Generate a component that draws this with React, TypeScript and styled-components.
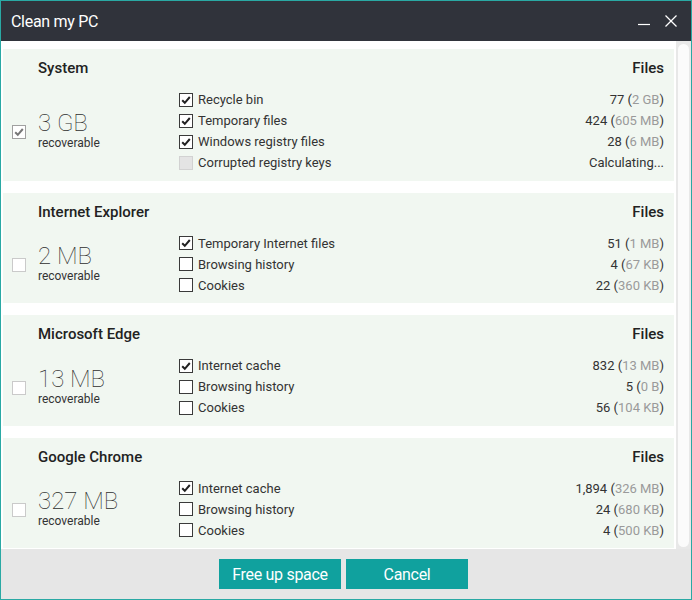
import React from 'react';
import styled, { createGlobalStyle } from 'styled-components';

const GlobalStyle = createGlobalStyle`
  html, body {
    margin: 0;
    padding: 0;
    background: #ffffff;
  }
  * {
    box-sizing: border-box;
  }
`;

const Window = styled.div`
  width: 692px;
  height: 600px;
  border: 1px solid #2aa9a4;
  display: flex;
  flex-direction: column;
  background: #ffffff;
  font-family: Roboto, 'Liberation Sans', sans-serif;
  color: #333;
`;

const TitleBar = styled.div`
  height: 40px;
  flex: none;
  background: #30333b;
  color: #ffffff;
  display: flex;
  align-items: center;
  padding: 0 14px 0 10px;
  font-size: 16px;
  letter-spacing: -0.3px;
`;

const WindowControls = styled.div`
  margin-left: auto;
  display: flex;
  align-items: center;
  gap: 15px;
`;

const ControlIcon = styled.svg`
  width: 12px;
  height: 12px;
  display: block;
`;

const Body = styled.div`
  flex: 1;
  min-height: 0;
  display: flex;
`;

const ScrollArea = styled.div`
  flex: 1;
  overflow: hidden;
  padding: 8px 2px 8px 2px;
  display: flex;
  flex-direction: column;
  gap: 12px;
`;

const ScrollTrack = styled.div`
  width: 15px;
  flex: none;
  background: #e8e8e8;
  padding: 3px 2px 2px 2px;
  display: flex;
`;

const ScrollThumb = styled.div`
  flex: 1;
  background: #fbfbfb;
  border-radius: 6px;
`;

const Section = styled.div`
  flex: none;
  background: #f1f7f1;
  padding: 10px 10px 7.5px 0;
`;

const SectionHeader = styled.div`
  display: flex;
  justify-content: space-between;
  align-items: center;
  height: 18px;
  padding-left: 35px;
  margin-bottom: 12px;
  font-size: 15px;
  font-weight: 500;
  color: #222;
`;

const SectionBody = styled.div`
  display: flex;
`;

const Summary = styled.div`
  width: 176px;
  flex: none;
  display: flex;
  align-items: center;
`;

const SummaryCheck = styled.div<{ $checked?: boolean }>`
  width: 14px;
  height: 14px;
  margin: 2px 12px 0 9px;
  flex: none;
  border: 1px solid ${p => (p.$checked ? '#a0a0a0' : '#cacaca')};
  background: #ffffff;
  display: flex;
  align-items: center;
  justify-content: center;
`;

const SummaryText = styled.div`
  display: flex;
  flex-direction: column;
`;

const BigSize = styled.div`
  font-size: 24px;
  line-height: 24px;
  font-weight: 100;
  color: #2e2e2e;
`;

const Recoverable = styled.div`
  font-size: 12px;
  line-height: 16px;
  color: #333;
`;

const ItemList = styled.div`
  flex: 1;
  display: flex;
  flex-direction: column;
`;

const ItemRow = styled.div`
  height: 21px;
  display: flex;
  align-items: center;
  font-size: 13px;
  color: #333;
`;

const ItemCheck = styled.div<{ $disabled?: boolean }>`
  width: 14px;
  height: 14px;
  margin-right: 5px;
  flex: none;
  border: 1px solid ${p => (p.$disabled ? '#d2d2d2' : '#3a3a3a')};
  background: ${p => (p.$disabled ? '#e4e4e4' : '#ffffff')};
  display: flex;
  align-items: center;
  justify-content: center;
`;

const ItemLabel = styled.span`
  flex: 1;
`;

const ItemCount = styled.span`
  color: #333;
`;

const Muted = styled.span`
  color: #9a9a9a;
`;

const Footer = styled.div`
  height: 50px;
  flex: none;
  background: #e6e6e6;
  display: flex;
  justify-content: center;
  gap: 5px;
  padding: 10px 5px 0 0;
`;

const Button = styled.button`
  width: 122px;
  height: 30px;
  border: none;
  background: #10a19e;
  color: #ffffff;
  font-family: Roboto, 'Liberation Sans', sans-serif;
  font-size: 16px;
  letter-spacing: -0.3px;
  cursor: pointer;
`;

type Item = {
  label: string;
  checked?: boolean;
  disabled?: boolean;
  count?: string;
  size?: string;
  text?: string;
};

type Group = {
  name: string;
  size: string;
  checked?: boolean;
  items: Item[];
};

const groups: Group[] = [
  {
    name: 'System',
    size: '3 GB',
    checked: true,
    items: [
      { label: 'Recycle bin', checked: true, count: '77', size: '2 GB' },
      { label: 'Temporary files', checked: true, count: '424', size: '605 MB' },
      { label: 'Windows registry files', checked: true, count: '28', size: '6 MB' },
      { label: 'Corrupted registry keys', disabled: true, text: 'Calculating...' },
    ],
  },
  {
    name: 'Internet Explorer',
    size: '2 MB',
    items: [
      { label: 'Temporary Internet files', checked: true, count: '51', size: '1 MB' },
      { label: 'Browsing history', count: '4', size: '67 KB' },
      { label: 'Cookies', count: '22', size: '360 KB' },
    ],
  },
  {
    name: 'Microsoft Edge',
    size: '13 MB',
    items: [
      { label: 'Internet cache', checked: true, count: '832', size: '13 MB' },
      { label: 'Browsing history', count: '5', size: '0 B' },
      { label: 'Cookies', count: '56', size: '104 KB' },
    ],
  },
  {
    name: 'Google Chrome',
    size: '327 MB',
    items: [
      { label: 'Internet cache', checked: true, count: '1,894', size: '326 MB' },
      { label: 'Browsing history', count: '24', size: '680 KB' },
      { label: 'Cookies', count: '4', size: '500 KB' },
    ],
  },
];

const Tick = ({ color }: { color: string }) => (
  <svg width="10" height="10" viewBox="0 0 10 10">
    <polyline points="1.2,5.2 3.8,7.8 8.8,2" fill="none" stroke={color} strokeWidth="2" />
  </svg>
);

export default function App() {
  return (
    <>
      <GlobalStyle />
      <Window>
        <TitleBar>
          Clean my PC
          <WindowControls>
            <ControlIcon viewBox="0 0 12 12">
              <line x1="0" y1="9.5" x2="12" y2="9.5" stroke="#fff" strokeWidth="1.2" />
            </ControlIcon>
            <ControlIcon viewBox="0 0 12 12">
              <line x1="0.5" y1="0.5" x2="11.5" y2="11.5" stroke="#fff" strokeWidth="1.2" />
              <line x1="11.5" y1="0.5" x2="0.5" y2="11.5" stroke="#fff" strokeWidth="1.2" />
            </ControlIcon>
          </WindowControls>
        </TitleBar>

        <Body>
          <ScrollArea>
            {groups.map(group => (
              <Section key={group.name}>
                <SectionHeader>
                  <span>{group.name}</span>
                  <span>Files</span>
                </SectionHeader>
                <SectionBody>
                  <Summary>
                    <SummaryCheck $checked={group.checked}>
                      {group.checked && <Tick color="#777" />}
                    </SummaryCheck>
                    <SummaryText>
                      <BigSize>{group.size}</BigSize>
                      <Recoverable>recoverable</Recoverable>
                    </SummaryText>
                  </Summary>
                  <ItemList>
                    {group.items.map(item => (
                      <ItemRow key={item.label}>
                        <ItemCheck $disabled={item.disabled}>
                          {item.checked && <Tick color="#222" />}
                        </ItemCheck>
                        <ItemLabel>{item.label}</ItemLabel>
                        {item.text ? (
                          <ItemCount>{item.text}</ItemCount>
                        ) : (
                          <ItemCount>
                            {item.count} (<Muted>{item.size}</Muted>)
                          </ItemCount>
                        )}
                      </ItemRow>
                    ))}
                  </ItemList>
                </SectionBody>
              </Section>
            ))}
          </ScrollArea>
          <ScrollTrack>
            <ScrollThumb />
          </ScrollTrack>
        </Body>

        <Footer>
          <Button>Free up space</Button>
          <Button>Cancel</Button>
        </Footer>
      </Window>
    </>
  );
}
